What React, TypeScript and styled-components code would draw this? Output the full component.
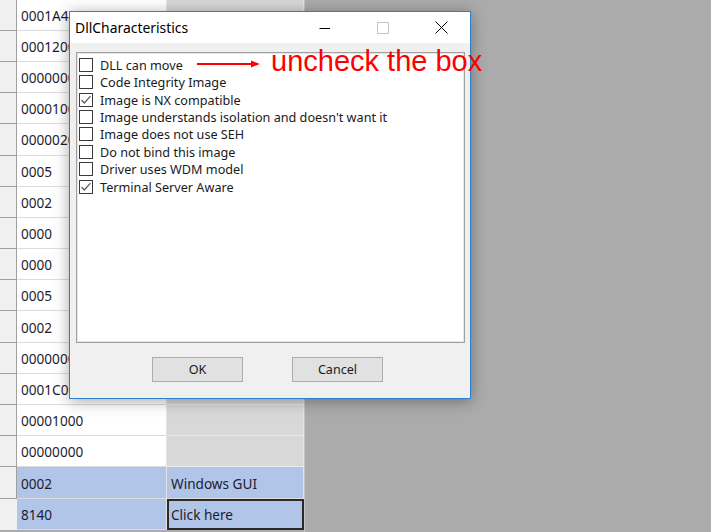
import React from "react";
import styled, { createGlobalStyle } from "styled-components";

const GlobalStyle = createGlobalStyle`
  html, body {
    margin: 0;
    padding: 0;
    background: #ababab;
  }
  * { box-sizing: border-box; }
`;

const Page = styled.div`
  position: relative;
  width: 711px;
  height: 532px;
  overflow: hidden;
  display: flex;
  background: #ababab;
`;

const Grid = styled.div`
  width: 305px;
  margin-top: -0.4px;
  display: flex;
  flex-direction: column;
  border-right: 1px solid #c4c4c4;
`;

const Row = styled.div`
  display: grid;
  grid-template-columns: 17px 150px 137px;
  height: 31.2px;
  flex: none;
`;

const Header = styled.div<{ $last?: boolean }>`
  background: #f0f0f0;
  border-right: 1px solid ${(p) => (p.$last ? "#f0f0f0" : "#a0a0a0")};
  border-bottom: 1px solid ${(p) => (p.$last ? "#f0f0f0" : "#a0a0a0")};
`;

const Cell = styled.div<{ $grey?: boolean; $sel?: boolean; $edit?: boolean }>`
  display: flex;
  align-items: center;
  padding-left: ${(p) => (p.$edit ? "2px" : "4px")};
  padding-top: 1px;
  background: ${(p) => (p.$sel ? "#b0c5e8" : p.$grey ? "#d8d8d8" : "#ffffff")};
  border-bottom: 1px solid ${(p) => (p.$grey && !p.$sel ? "#ececec" : "#dcdcdc")};
  border-right: 1px solid #e4e4e4;
  font-family: "Noto Sans", "Liberation Sans", sans-serif;
  font-size: 13.6px;
  color: #1c1c30;
  white-space: nowrap;
  overflow: hidden;
  ${(p) => p.$edit && "border: 2px solid #2a2a2a;"}
`;

const Dialog = styled.div`
  position: absolute;
  left: 69px;
  top: 11px;
  width: 402px;
  height: 388px;
  border: 1px solid #2f7dcf;
  background: #f0f0f0;
  display: flex;
  flex-direction: column;
  box-shadow: 0 2px 14px rgba(0, 0, 0, 0.35);
  font-family: "Noto Sans", "Open Sans", sans-serif;
  color: #1a1a1a;
`;

const TitleBar = styled.div`
  height: 31px;
  background: #ffffff;
  display: flex;
  align-items: center;
  flex: none;
`;

const Title = styled.div`
  flex: 1;
  padding-left: 5px;
  font-size: 13.9px;
  color: #000;
`;

const CaptionButton = styled.div`
  width: 58px;
  height: 31px;
  display: flex;
  align-items: center;
  justify-content: center;
`;

const ListBox = styled.div`
  margin: 9px 5px 0 6px;
  height: 291px;
  background: #fff;
  border: 1px solid #a0a0a0;
  box-shadow: inset 0 0 0 1px #e6e6e6;
  padding: 3px 2px;
  display: flex;
  flex-direction: column;
`;

const Item = styled.div`
  display: flex;
  align-items: center;
  height: 17.43px;
  gap: 7px;
  font-size: 12.65px;
  white-space: nowrap;
`;

const Box = styled.div`
  width: 14px;
  height: 14px;
  border: 1px solid #3a3a3a;
  background: #fff;
  display: flex;
  align-items: center;
  justify-content: center;
  flex: none;
`;

const Buttons = styled.div`
  display: flex;
  gap: 49px;
  padding-left: 82px;
  margin-top: 14px;
`;

const Button = styled.div`
  width: 91px;
  height: 25px;
  background: #e1e1e1;
  border: 1px solid #adadad;
  display: flex;
  align-items: center;
  justify-content: center;
  font-size: 12.6px;
  color: #1a1a1a;
`;

const Note = styled.div`
  position: absolute;
  left: 271px;
  top: 47px;
  font-family: "Liberation Sans", Arial, sans-serif;
  font-size: 29px;
  line-height: 29px;
  color: #ff0000;
  white-space: nowrap;
`;

const Arrow = styled.svg`
  position: absolute;
  left: 197px;
  top: 59px;
`;

const col1 = [
  "0001A416", "00012000", "00000000", "00001000", "00000200", "0005", "0002",
  "0000", "0000", "0005", "0002", "00000000", "0001C000", "00001000",
  "00000000", "0002", "8140",
];

const items: [string, boolean][] = [
  ["DLL can move", false],
  ["Code Integrity Image", false],
  ["Image is NX compatible", true],
  ["Image understands isolation and doesn't want it", false],
  ["Image does not use SEH", false],
  ["Do not bind this image", false],
  ["Driver uses WDM model", false],
  ["Terminal Server Aware", true],
];

const Check = () => (
  <svg width="12" height="12" viewBox="0 0 12 12">
    <polyline points="1.5,6 4.3,9 10.5,2.2" fill="none" stroke="#5a5a5a" strokeWidth="1.2" />
  </svg>
);

export default function App() {
  return (
    <>
      <GlobalStyle />
      <Page>
        <Grid>
          {col1.map((v, i) => {
            const sel = i >= 15;
            let c2 = "";
            if (i === 0) c2 = "NEXS";
            if (i === 15) c2 = "Windows GUI";
            if (i === 16) c2 = "Click here";
            return (
              <Row key={i}>
                <Header $last={i === 16} />
                <Cell $sel={sel}>{v}</Cell>
                <Cell $grey $sel={sel} $edit={i === 16}>{c2}</Cell>
              </Row>
            );
          })}
        </Grid>

        <Dialog>
          <TitleBar>
            <Title>DllCharacteristics</Title>
            <CaptionButton>
              <svg width="12" height="12" viewBox="0 0 12 12">
                <line x1="0.5" y1="6.5" x2="11" y2="6.5" stroke="#000" strokeWidth="1" />
              </svg>
            </CaptionButton>
            <CaptionButton>
              <svg width="12" height="12" viewBox="0 0 12 12">
                <rect x="0.5" y="0.5" width="11" height="11" fill="none" stroke="#c4c4c4" strokeWidth="1" />
              </svg>
            </CaptionButton>
            <CaptionButton>
              <svg width="13" height="13" viewBox="0 0 13 13">
                <path d="M0.5 0.5 L12.5 12.5 M12.5 0.5 L0.5 12.5" stroke="#000" strokeWidth="1" />
              </svg>
            </CaptionButton>
          </TitleBar>

          <ListBox>
            {items.map(([label, checked]) => (
              <Item key={label}>
                <Box>{checked && <Check />}</Box>
                <span>{label}</span>
              </Item>
            ))}
          </ListBox>

          <Buttons>
            <Button>OK</Button>
            <Button>Cancel</Button>
          </Buttons>
        </Dialog>

        <Arrow width="66" height="10" viewBox="0 0 66 10">
          <line x1="0" y1="5" x2="56" y2="5" stroke="#ff0000" strokeWidth="2" />
          <polygon points="54,1.5 63,5 54,8.5" fill="#ff0000" />
        </Arrow>
        <Note>uncheck the box</Note>
      </Page>
    </>
  );
}
